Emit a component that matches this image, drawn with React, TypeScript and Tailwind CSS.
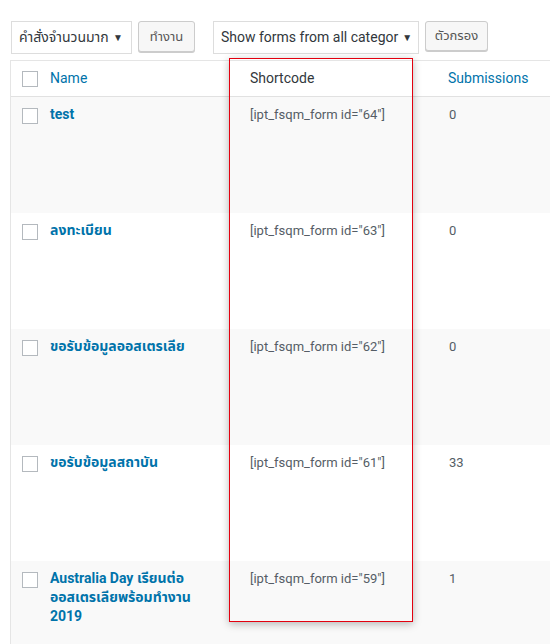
import React from "react";

const font = { fontFamily: 'Roboto, "Noto Sans Thai", "Noto Sans", Tahoma, sans-serif' };

const rows = [
  { name: "test", id: "64", subs: "0" },
  { name: "ลงทะเบียน", id: "63", subs: "0" },
  { name: "ขอรับข้อมูลออสเตรเลีย", id: "62", subs: "0" },
  { name: "ขอรับข้อมูลสถาบัน", id: "61", subs: "33" },
  { name: "Australia Day เรียนต่อ ออสเตรเลียพร้อมทำงาน 2019", id: "59", subs: "1" },
];

function Box() {
  return <div className="w-4 h-4 border border-[#b4b9be] bg-white shrink-0" />;
}

export default function App() {
  return (
    <div className="relative w-[550px] h-[644px] overflow-hidden bg-white text-[14px] text-[#32373c]" style={font}>
      <div className="flex items-start h-[58px] pt-[21px] pl-[11px]">
        <div className="w-[121px] h-[33px] border border-[#ddd] bg-white flex items-center justify-between pl-[7px] pr-[8px] text-[14px] text-[#32373c]">
          <span>คำสั่งจำนวนมาก</span>
          <span className="text-[10px]">▼</span>
        </div>
        <div className="ml-[6px] w-[57px] h-[31px] border border-[#ccc] rounded-[3px] bg-[#f7f7f7] shadow-[0_1px_0_#ccc] flex items-center justify-center text-[13px] text-[#555]">
          ทำงาน
        </div>
        <div className="ml-[18px] w-[206px] h-[33px] border border-[#ddd] bg-white flex items-center justify-between pl-[7px] pr-[8px] text-[14px] text-[#32373c] whitespace-nowrap overflow-hidden">
          <span>Show forms from all categor</span>
          <span className="text-[10px] ml-1">▼</span>
        </div>
        <div className="ml-[6px] w-[63px] h-[30px] border border-[#ccc] rounded-[3px] bg-[#f7f7f7] shadow-[0_1px_0_#ccc] flex items-center justify-center text-[13px] text-[#555]">
          ตัวกรอง
        </div>
      </div>

      <div className="ml-[10px] border-l border-t border-[#e5e5e5] mt-[2px]">
        <div className="flex h-[36px] items-center border-b border-[#e1e1e1] bg-white">
          <div className="w-[39px] pl-[11px] flex"><Box /></div>
          <div className="w-[199px] text-[#0073aa]">Name</div>
          <div className="w-[199px] pl-[1px]">Shortcode</div>
          <div className="text-[#0073aa]">Submissions</div>
        </div>
        {rows.map((r, i) => (
          <div key={r.id} className={`flex h-[116px] items-start ${i % 2 === 0 ? "bg-[#f9f9f9]" : "bg-white"}`}>
            <div className="w-[39px] pl-[11px] pt-[11px] flex"><Box /></div>
            <div className="w-[199px] pr-[40px] pt-[8px] font-bold text-[#0073aa] leading-[19px]">{r.name}</div>
            <div className="w-[199px] pl-[1px] pt-[9px] text-[13px] text-[#555d66] leading-[18px]">[ipt_fsqm_form id="{r.id}"]</div>
            <div className="pt-[9px] pl-[1px] text-[13px] text-[#555d66] leading-[18px]">{r.subs}</div>
          </div>
        ))}
      </div>

      <div className="absolute left-[229px] top-[58px] w-[184px] h-[564px] border border-[#e3000f] shadow-[0_2px_8px_rgba(0,0,0,0.28)] pointer-events-none" />
    </div>
  );
}
